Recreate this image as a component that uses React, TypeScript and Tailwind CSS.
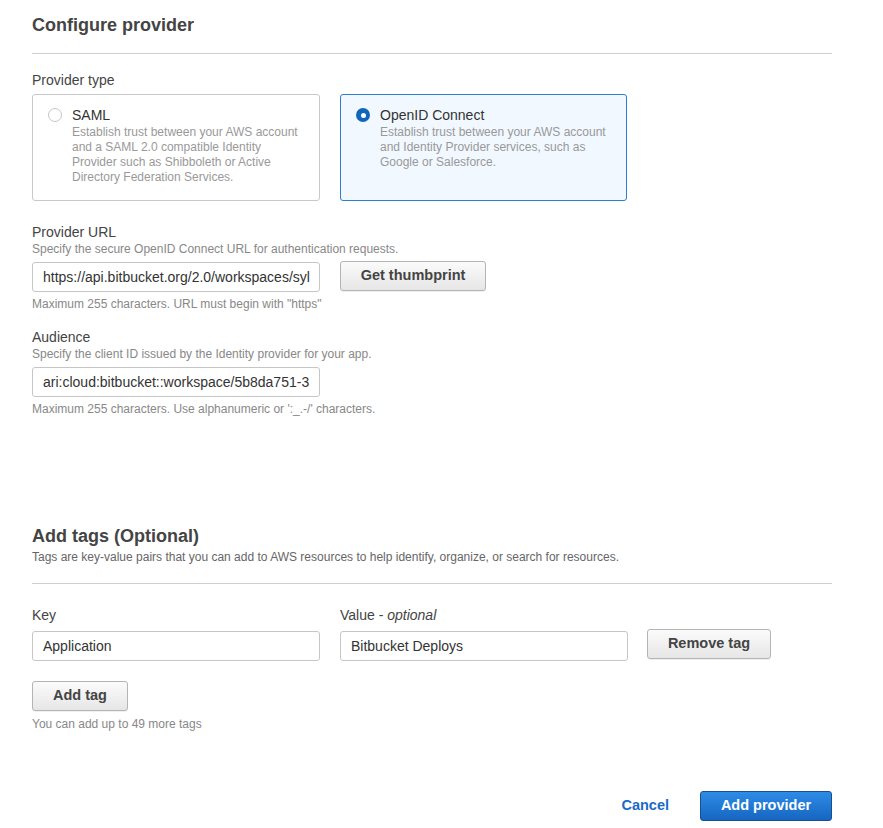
import React from 'react';

const font = { fontFamily: '"Liberation Sans", Arial, sans-serif' };

function Radio({ checked }: { checked: boolean }) {
  if (checked) {
    return (
      <span className="mt-[3px] flex h-[14px] w-[14px] shrink-0 items-center justify-center rounded-full bg-[#1166bb]">
        <span className="h-[5px] w-[5px] rounded-full bg-white" />
      </span>
    );
  }
  return <span className="mt-[3px] h-[14px] w-[14px] shrink-0 rounded-full border border-[#c6c6c6] bg-white" />;
}

function TypeCard({
  title,
  desc,
  selected,
}: {
  title: string;
  desc: string;
  selected: boolean;
}) {
  return (
    <div
      className={`flex h-[107px] gap-[10px] rounded-[3px] border pl-[15px] pr-[14px] pt-[10px] ${
        selected ? 'border-[#2a7fd4] bg-[#f1f8ff]' : 'border-[#c8c8c8] bg-white'
      }`}
    >
      <Radio checked={selected} />
      <div>
        <div className="text-[14px] leading-[20px] text-[#333]">{title}</div>
        <div className="text-[12px] leading-[15px] text-[#999]">{desc}</div>
      </div>
    </div>
  );
}

function TextInput({ value }: { value: string }) {
  return (
    <div className="flex h-[30px] w-[288px] items-center overflow-hidden whitespace-nowrap rounded-[3px] border border-[#c6c6c6] bg-white px-[10px] text-[14px] text-[#333]">
      {value}
    </div>
  );
}

function GrayButton({ label, w }: { label: string; w: string }) {
  return (
    <button
      className={`flex h-[30px] ${w} items-center justify-center rounded-[3px] border border-[#b4b4b4] bg-gradient-to-b from-[#fbfbfb] to-[#e6e6e6] text-[14.5px] font-bold text-[#444] shadow-[0_1px_0_rgba(0,0,0,0.06)]`}
    >
      {label}
    </button>
  );
}

export default function App() {
  return (
    <div className="min-h-[828px] bg-white" style={font}>
      <div className="ml-8 w-[800px] pt-[13px]">
        <h2 className="text-[18px] font-bold leading-[24px] text-[#444]">Configure provider</h2>
        <div className="mt-[16px] border-t border-[#cfcfcf]" />

        <div className="mt-[16px] text-[14px] leading-[20px] text-[#444]">Provider type</div>
        <div className="mt-[4px] grid grid-cols-[288px_287px] gap-x-[20px]">
          <TypeCard
            title="SAML"
            desc="Establish trust between your AWS account and a SAML 2.0 compatible Identity Provider such as Shibboleth or Active Directory Federation Services."
            selected={false}
          />
          <TypeCard
            title="OpenID Connect"
            desc="Establish trust between your AWS account and Identity Provider services, such as Google or Salesforce."
            selected
          />
        </div>

        <div className="mt-[21px] text-[14px] leading-[20px] text-[#444]">Provider URL</div>
        <div className="text-[12px] leading-[14px] text-[#888]">
          Specify the secure OpenID Connect URL for authentication requests.
        </div>
        <div className="mt-[6px] flex items-start gap-[20px]">
          <TextInput value="https://api.bitbucket.org/2.0/workspaces/syl" />
          <div className="-mt-px">
            <GrayButton label="Get thumbprint" w="w-[146px]" />
          </div>
        </div>
        <div className="mt-[5px] text-[12px] leading-[14px] text-[#888]">
          Maximum 255 characters. URL must begin with "https"
        </div>

        <div className="mt-[16px] text-[14px] leading-[20px] text-[#444]">Audience</div>
        <div className="text-[12px] leading-[14px] text-[#888]">
          Specify the client ID issued by the Identity provider for your app.
        </div>
        <div className="mt-[6px]">
          <TextInput value="ari:cloud:bitbucket::workspace/5b8da751-3" />
        </div>
        <div className="mt-[5px] text-[12px] leading-[14px] text-[#888]">
          Maximum 255 characters. Use alphanumeric or ':_.-/' characters.
        </div>

        <h2 className="mt-[108px] text-[18px] font-bold leading-[24px] text-[#444]">Add tags (Optional)</h2>
        <div className="mt-[2px] text-[12px] leading-[14px] text-[#666]">
          Tags are key-value pairs that you can add to AWS resources to help identify, organize, or search for
          resources.
        </div>
        <div className="mt-[19px] border-t border-[#cfcfcf]" />

        <div className="mt-[21px] grid grid-cols-[288px_287px_auto] gap-x-[20px]">
          <div className="text-[14px] leading-[20px] text-[#444]">Key</div>
          <div className="text-[14px] leading-[20px] text-[#444]">
            Value - <i>optional</i>
          </div>
          <div />
          <div className="mt-[6px]">
            <TextInput value="Application" />
          </div>
          <div className="mt-[6px]">
            <TextInput value="Bitbucket Deploys" />
          </div>
          <div className="mt-[4px]">
            <GrayButton label="Remove tag" w="w-[124px]" />
          </div>
        </div>

        <div className="mt-[20px]">
          <GrayButton label="Add tag" w="w-[96px]" />
        </div>
        <div className="mt-[6px] text-[12px] leading-[14px] text-[#888]">You can add up to 49 more tags</div>

        <div className="mt-[60px] flex items-center justify-end gap-[31px]">
          <button className="text-[14.5px] font-bold text-[#1b6ac9]">Cancel</button>
          <button className="flex h-[30px] w-[132px] items-center justify-center rounded-[3px] border border-[#1a4f8f] bg-gradient-to-b from-[#2e8ce6] to-[#1566c2] text-[14.5px] font-bold text-white">
            Add provider
          </button>
        </div>
      </div>
    </div>
  );
}
